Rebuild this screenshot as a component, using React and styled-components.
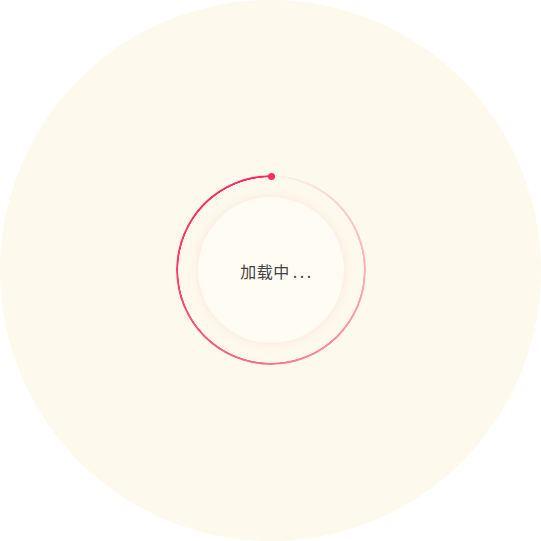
import React from 'react';
import styled, { createGlobalStyle } from 'styled-components'

const GlobalStyle = createGlobalStyle`
  html, body {
    margin: 0;
    padding: 0;
    background: #ffffff;
  }
`;

const Stage = styled.div`
  width: 541px;
  height: 541px;
  display: flex;
  align-items: center;
  justify-content: center;
`;

const Backdrop = styled.div`
  width: 541px;
  height: 541px;
  border-radius: 50%;
  background: #fdf9ec;
  display: flex;
  align-items: center;
  justify-content: center;
`;

const Spinner = styled.div`
  position: relative;
  width: 190px;
  height: 190px;
  margin: 0 0 1px 1px;
  display: flex;
  align-items: center;
  justify-content: center;
`;

const Ring = styled.div`
  position: absolute;
  inset: 0;
  border-radius: 50%;
  background: conic-gradient(
    from 0deg,
    rgba(255, 120, 150, 0) 0deg,
    rgba(255, 130, 155, 0.3) 40deg,
    rgba(255, 120, 155, 0.6) 90deg,
    rgba(255, 100, 140, 0.9) 180deg,
    #ff3a70 270deg,
    #ff2a60 360deg
  );
  -webkit-mask: radial-gradient(farthest-side, transparent calc(100% - 2.5px), #000 calc(100% - 2px));
  mask: radial-gradient(farthest-side, transparent calc(100% - 2.5px), #000 calc(100% - 2px));
`;

const Head = styled.span`
  position: absolute;
  top: -2.5px;
  left: 50%;
  width: 7px;
  height: 7px;
  margin-left: -3.5px;
  border-radius: 50%;
  background: #ff2a60;
`;

const Core = styled.div`
  width: 146px;
  height: 146px;
  border-radius: 50%;
  background: #fffcf4;
  box-shadow: 0 0 8px rgba(255, 170, 170, 0.25);
  display: flex;
  align-items: center;
  justify-content: center;
`;

const Label = styled.span`
  font-family: "Noto Sans CJK SC", "Noto Sans", sans-serif;
  font-size: 16px;
  color: #444444;
  letter-spacing: 0.5px;
  padding: 2px 0 0 12px;
  display: flex;
  align-items: baseline;
`;

const Dots = styled.span`
  letter-spacing: 2.5px;
  margin-left: 3px;
`;

export default function App() {
  return (
    <Stage>
      <GlobalStyle />
      <Backdrop>
        <Spinner>
          <Ring />
          <Head />
          <Core>
            <Label>加载中<Dots>...</Dots></Label>
          </Core>
        </Spinner>
      </Backdrop>
    </Stage>
  )
}
